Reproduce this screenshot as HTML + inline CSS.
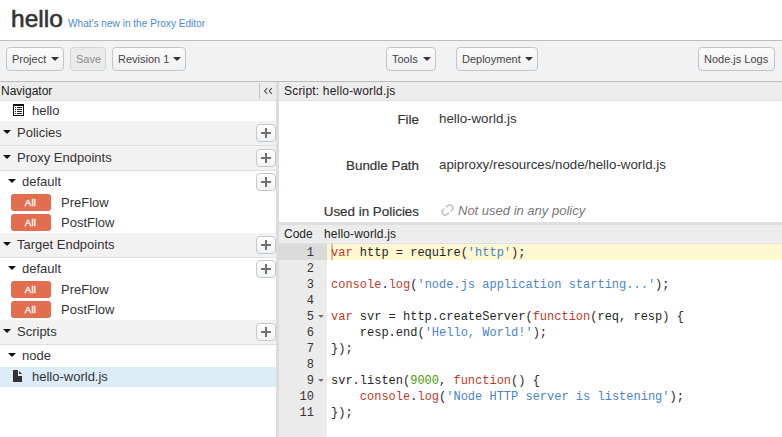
<!DOCTYPE html>
<html><head><meta charset="utf-8">
<style>
*{box-sizing:border-box;margin:0;padding:0}
html,body{width:782px;height:437px;overflow:hidden;background:#fff;font-family:"Liberation Sans",sans-serif;color:#333;position:relative}
.abs{position:absolute}
.t{position:absolute;white-space:nowrap;line-height:1}
#hdr-title{left:11px;top:7px;font-size:24.5px;color:#333;-webkit-text-stroke:0.6px #333}
#hdr-link{left:68px;top:19px;font-size:10.1px;color:#4a8bd0}
#hdr-line{left:0;top:40px;width:782px;height:1px;background:#bdbdbd}
#toolbar{left:0;top:41px;width:782px;height:40px;background:#f2f2f2}
#tb-line{left:0;top:81px;width:782px;height:1px;background:#bdbdbd}
.btn{position:absolute;top:47px;height:24px;border:1px solid #bfc7cc;border-radius:4px;background:linear-gradient(#fbfbfb,#f0f0f0);font-size:11px;color:#444;white-space:nowrap}
.btn span.l{position:absolute;top:6px;line-height:1}
.btn.dis{background:#ebebeb;color:#8a8a8a;border-color:#d0d5d8}
.caret{position:absolute;top:9px;width:0;height:0;border-left:4px solid transparent;border-right:4px solid transparent;border-top:4px solid #333}
/* left nav */
#navhdr{left:0;top:82px;width:276px;height:19px;background:#ececec;border-bottom:1px solid #e0e0e0}
#split{left:276px;top:82px;width:3px;height:355px;background:#dcdcdc}
.row{position:absolute;left:0;width:276px}
.sec{background:#f2f2f2;border-bottom:1px solid #dedede;height:25px}
.tri{position:absolute;width:0;height:0;border-left:4px solid transparent;border-right:4px solid transparent;border-top:4.5px solid #111}
.plus{position:absolute;left:256px;width:20px;height:18px;border:1px solid #c0c8cc;border-radius:4px;background:linear-gradient(#fdfdfd,#f3f3f3)}
.plus:before{content:"";position:absolute;left:4px;top:7px;width:10px;height:2px;background:#717171}
.plus:after{content:"";position:absolute;left:8px;top:3px;width:2px;height:10px;background:#717171}
.badge{position:absolute;left:11px;width:40px;height:17px;background:#e36d4f;border-radius:3px;color:#fff;font-size:9.6px;font-weight:normal;text-align:center;line-height:17.5px;-webkit-text-stroke:0.3px #fff;text-indent:-1px;letter-spacing:0.2px}
.nt{position:absolute;white-space:nowrap;line-height:1;font-size:13px;color:#333}
/* right */
#rhdr{left:279px;top:82px;width:503px;height:19px;background:#ececec;border-bottom:1px solid #e0e0e0}
.lbl{position:absolute;right:363px;font-size:13.4px;color:#333;white-space:nowrap;line-height:1;text-align:right;-webkit-text-stroke:0.2px #333}
.val{position:absolute;font-size:13.3px;color:#333;white-space:nowrap;line-height:1}
#codesplit{left:279px;top:222px;width:503px;height:3px;background:#dedede}
#codehdr{left:279px;top:225px;width:503px;height:19px;background:#ececec;border-bottom:1px solid #dedede;box-shadow:inset 0 -1px 0 #f0f0f0}
#gutter{left:279px;top:244px;width:48px;height:193px;background:#ebebeb}
.code{position:absolute;left:331px;font-family:"Liberation Mono",monospace;font-size:12px;line-height:16px;white-space:pre;color:#262626}
.ln{position:absolute;left:279px;width:35px;text-align:right;font-family:"Liberation Mono",monospace;font-size:12px;line-height:16px;color:#333}
.k{color:#bf3a2c}
.s{color:#4a84c8}
.n{color:#4a9a06}
.fold{position:absolute;left:318px;width:0;height:0;border-left:3px solid transparent;border-right:3px solid transparent;border-top:3px solid #777}
</style></head><body>
<div class="t" id="hdr-title">hello</div>
<div class="t" id="hdr-link">What's new in the Proxy Editor</div>
<div class="abs" id="hdr-line"></div>
<div class="abs" id="toolbar"></div>
<div class="abs" id="tb-line"></div>

<div class="btn" style="left:6px;width:58px"><span class="l" style="left:5px">Project</span><span class="caret" style="left:44px"></span></div>
<div class="btn dis" style="left:70px;width:36px"><span class="l" style="left:5px">Save</span></div>
<div class="btn" style="left:112px;width:74px"><span class="l" style="left:5px">Revision 1</span><span class="caret" style="left:60px"></span></div>
<div class="btn" style="left:386px;width:50px"><span class="l" style="left:5px">Tools</span><span class="caret" style="left:36px"></span></div>
<div class="btn" style="left:456px;width:82px"><span class="l" style="left:5px">Deployment</span><span class="caret" style="left:68px"></span></div>
<div class="btn" style="left:698px;width:77px"><span class="l" style="left:5px">Node.js Logs</span></div>

<!-- navigator -->
<div class="abs" id="navhdr"></div>
<div class="t" style="left:1px;top:85px;font-size:12px;color:#222">Navigator</div>
<div class="abs" style="left:259px;top:83px;width:1px;height:16px;background:#b8c4cc"></div>
<svg class="abs" style="left:263px;top:87px" width="11" height="8" viewBox="0 0 11 8"><path d="M4.2 1.2L1.6 4L4.2 6.8M8.8 1.2L6.2 4L8.8 6.8" fill="none" stroke="#4a4a4a" stroke-width="1.1"/></svg>

<svg class="abs" style="left:13px;top:104px" width="11" height="12" viewBox="0 0 11 12" shape-rendering="crispEdges"><path d="M0 0H11V12H0Z M1 2V11H10V2Z" fill="#111" fill-rule="evenodd"/><g fill="#222"><rect x="2" y="3" width="1" height="1"/><rect x="4" y="3" width="5" height="1"/><rect x="2" y="5" width="1" height="1"/><rect x="4" y="5" width="5" height="1"/><rect x="2" y="7" width="1" height="1"/><rect x="4" y="7" width="5" height="1"/><rect x="2" y="9" width="1" height="1"/><rect x="4" y="9" width="5" height="1"/></g></svg>
<div class="nt" style="left:32px;top:104px">hello</div>

<div class="row sec" style="top:121px"></div>
<div class="tri" style="left:3px;top:130px"></div>
<div class="nt" style="left:17px;top:126px">Policies</div>
<div class="plus" style="top:124px"></div>

<div class="row sec" style="top:146px"></div>
<div class="tri" style="left:3px;top:155px"></div>
<div class="nt" style="left:17px;top:151px">Proxy Endpoints</div>
<div class="plus" style="top:149px"></div>

<div class="tri" style="left:8px;top:179px"></div>
<div class="nt" style="left:22px;top:175px">default</div>
<div class="plus" style="top:173px"></div>
<div class="badge" style="top:194px">All</div>
<div class="nt" style="left:61px;top:196px">PreFlow</div>
<div class="badge" style="top:214px">All</div>
<div class="nt" style="left:61px;top:216px">PostFlow</div>

<div class="row sec" style="top:233px"></div>
<div class="tri" style="left:3px;top:242px"></div>
<div class="nt" style="left:17px;top:238px">Target Endpoints</div>
<div class="plus" style="top:236px"></div>

<div class="tri" style="left:8px;top:266px"></div>
<div class="nt" style="left:22px;top:262px">default</div>
<div class="plus" style="top:260px"></div>
<div class="badge" style="top:281px">All</div>
<div class="nt" style="left:61px;top:283px">PreFlow</div>
<div class="badge" style="top:301px">All</div>
<div class="nt" style="left:61px;top:303px">PostFlow</div>

<div class="row sec" style="top:320px"></div>
<div class="tri" style="left:3px;top:329px"></div>
<div class="nt" style="left:17px;top:325px">Scripts</div>
<div class="plus" style="top:323px"></div>

<div class="tri" style="left:8px;top:353px"></div>
<div class="nt" style="left:22px;top:349px">node</div>
<div class="row" style="top:367px;height:20px;background:#dcecf7"></div>
<svg class="abs" style="left:13px;top:370px" width="9" height="12" viewBox="0 0 9 12"><path d="M0 0H5V6H9V12H0Z" fill="#333"/><path d="M6 1L9 4H6Z" fill="#333"/></svg>
<div class="nt" style="left:32px;top:370px">hello-world.js</div>

<div class="abs" id="split"></div>

<!-- right -->
<div class="abs" id="rhdr"></div>
<div class="t" style="left:284px;top:85px;font-size:12px;color:#222;letter-spacing:0.19px">Script: hello-world.js</div>

<div class="lbl" style="top:113px">File</div>
<div class="val" style="left:439px;top:112px">hello-world.js</div>
<div class="lbl" style="top:159px">Bundle Path</div>
<div class="val" style="left:439px;top:158px">apiproxy/resources/node/hello-world.js</div>
<div class="lbl" style="top:205px">Used in Policies</div>
<svg class="abs" style="left:440px;top:203px" width="15" height="14" viewBox="0 0 15 14"><g transform="translate(7.5 7) rotate(-40)" fill="none" stroke="#c8c8c8" stroke-width="1.8" stroke-linecap="butt"><path d="M0.6 -3H3A3 3 0 0 1 3 3H1.4"/><path d="M-0.6 3H-3A3 3 0 0 1 -3 -3H-1.4"/></g></svg>
<div class="val" style="left:458px;top:204px;font-size:13px;font-style:italic;color:#777">Not used in any policy</div>

<div class="abs" id="codesplit"></div>
<div class="abs" id="codehdr"></div>
<div class="t" style="left:284px;top:228px;font-size:12px;color:#222">Code</div>
<div class="t" style="left:324px;top:228px;font-size:12px;color:#222;letter-spacing:0.15px">hello-world.js</div>

<div class="abs" id="gutter"></div>
<div class="abs" style="left:279px;top:244px;width:48px;height:16px;background:#dadada"></div>
<div class="abs" style="left:327px;top:244px;width:455px;height:16px;background:#fdf7d2"></div>
<div class="abs" style="left:331px;top:244px;width:2px;height:16px;background:#c9c2a2"></div>

<div class="ln" style="top:245px">1<br>2<br>3<br>4<br>5<br>6<br>7<br>8<br>9<br>10<br>11</div>
<div class="fold" style="top:315px"></div>
<div class="fold" style="top:379px"></div>
<div class="code" style="top:245px"><span class="k">var</span> http = require(<span class="s">'http'</span>);

<span class="k">console</span>.<span class="k">log</span>(<span class="s">'node.js application starting...'</span>);

<span class="k">var</span> svr = http.createServer(<span class="k">function</span>(req, resp) {
    resp.end(<span class="s">'Hello, World!'</span>);
});

svr.listen(<span class="n">9000</span>, <span class="k">function</span>() {
    <span class="k">console</span>.<span class="k">log</span>(<span class="s">'Node HTTP server is listening'</span>);
});</div>
</body></html>
